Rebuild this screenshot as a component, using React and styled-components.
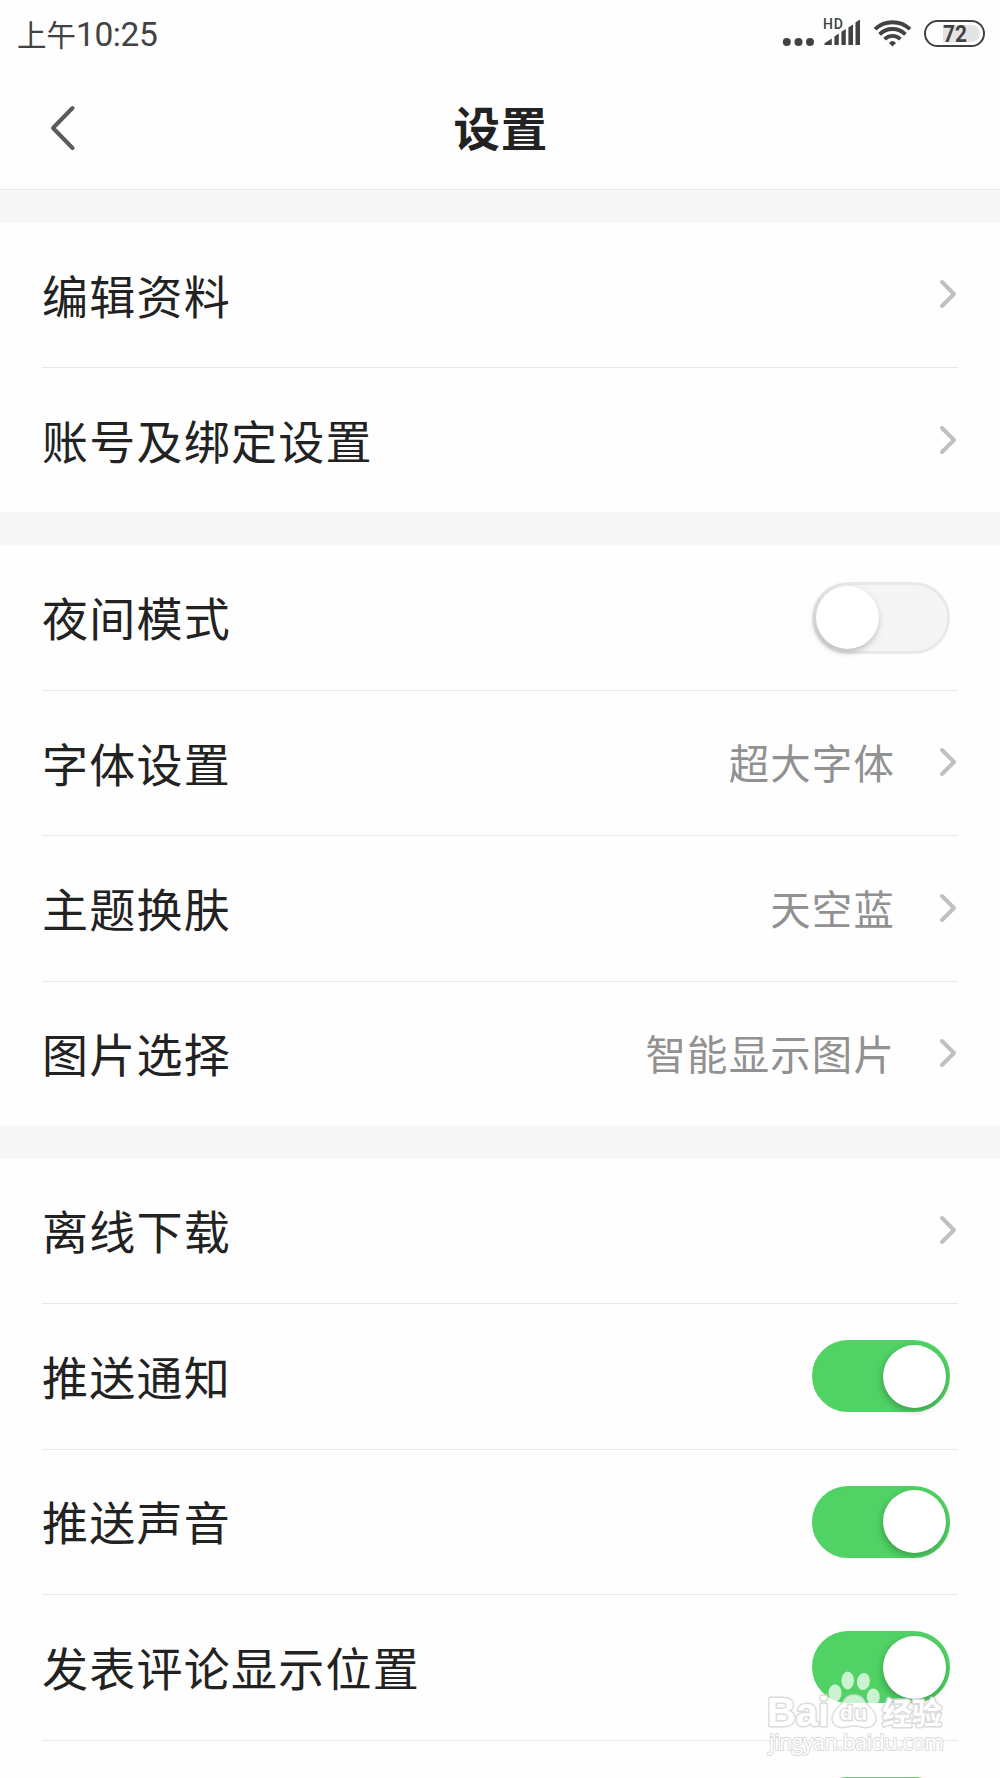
import React from 'react';
import styled, { createGlobalStyle } from 'styled-components';


const GlobalStyle = createGlobalStyle`
    * {
        box-sizing: border-box;
    }

    body {
        margin: 0;
        background-color: #fefefe;
        font-family: "Noto Sans CJK SC", "Noto Sans", sans-serif;
    }
`;

const PageStyled = styled.div`
    position: relative;
    width: 1000px;
    height: 1778px;
    overflow: hidden;
    background-color: #fefefe;
`;

const StatusBar = styled.div`
    display: flex;
    align-items: center;
    height: 66px;
    padding: 0 15px 0 17px;
    color: #424242;
`;

const TimeStyled = styled.div`
    display: flex;
    align-items: baseline;
    flex-grow: 1;
    margin-top: 2px;
    font-size: 29.5px;
    line-height: 40px;
`;

const ClockStyled = styled.span`
    font-family: Roboto, sans-serif;
    font-size: 33.5px;
    letter-spacing: -0.4px;
`;

const StatusIcons = styled.svg`
    display: block;
    width: 140px;
    height: 40px;
    margin-right: 4px;
`;

const BatteryStyled = styled.div`
    display: flex;
    align-items: center;
    width: 61px;
    height: 27px;
    padding: 0 3px 0 16.5px;
    border: 2.5px solid #424242;
    border-radius: 14px;
`;

const BatteryLevel = styled.div`
    width: 37px;
    height: 17px;
    border-radius: 0 9px 9px 0;
    background-color: #e4e4e4;
    font-family: Roboto, sans-serif;
    font-size: 24px;
    font-weight: 700;
    line-height: 18px;
`;

const BatteryText = styled.span`
    display: inline-block;
    transform: scaleX(0.87);
    transform-origin: left;
`;

const HeaderStyled = styled.header`
    display: grid;
    grid-template-columns: 100px 1fr 100px;
    align-items: center;
    height: 124px;
    border-bottom: 1px solid #e6e6e6;
`;

const BackButton = styled.button`
    display: flex;
    margin: 0 0 0 50px;
    padding: 0;
    border: none;
    background: none;
`;

const TitleStyled = styled.h1`
    margin: 0 0 4px 1.5px;
    color: #222222;
    font-size: 46.5px;
    font-weight: 700;
    letter-spacing: 0.8px;
    line-height: 60px;
    text-align: center;
`;

const GroupStyled = styled.section`
    padding: 0 42px;
    border-top: 33px solid #f7f7f7;
`;

const RowStyled = styled.div`
    display: flex;
    align-items: center;
    height: ${props => (props.$last ? 144 : 145.45)}px;
    border-bottom: ${props => (props.$last ? 'none' : '1px solid #e8e8e8')};
`;

const LabelStyled = styled.span`
    flex-grow: 1;
    margin-bottom: 3px;
    color: #222222;
    font-size: 46px;
    letter-spacing: 1.25px;
    line-height: 60px;
`;

const ValueStyled = styled.span`
    margin-bottom: 2px;
    margin-right: 44px;
    color: #919191;
    font-size: 40.4px;
    letter-spacing: 1.2px;
    line-height: 54px;
`;

const ArrowStyled = styled.svg`
    display: block;
    margin: 0 1px 1.5px 0;
`;

const SwitchStyled = styled.div`
    display: flex;
    align-items: center;
    justify-content: ${props => (props.$on ? 'flex-end' : 'flex-start')};
    width: 138px;
    height: 72px;
    margin-right: 8.5px;
    padding: 0 1px;
    border: 3px solid ${props => (props.$on ? '#50d264' : '#e9e9e9')};
    border-radius: 36px;
    background-color: ${props => (props.$on ? '#50d264' : '#f5f5f5')};
`;

const KnobStyled = styled.div`
    width: 63px;
    height: 63px;
    border-radius: 50%;
    background-color: #ffffff;
    box-shadow: -1px 3px 7px rgba(0, 0, 0, 0.25);
`;

const WatermarkStyled = styled.svg`
    position: absolute;
    left: 760px;
    top: 1664px;
`;

const WatermarkText = styled.text`
    fill: #ffffff;
    stroke: #dcdcdc;
    stroke-width: ${props => props.$outline || 3}px;
    stroke-linejoin: round;
    paint-order: stroke;
`;

const groups = [
    [
        { label: '编辑资料' },
        { label: '账号及绑定设置' },
    ],
    [
        { label: '夜间模式', type: 'switch', on: false },
        { label: '字体设置', value: '超大字体' },
        { label: '主题换肤', value: '天空蓝' },
        { label: '图片选择', value: '智能显示图片' },
    ],
    [
        { label: '离线下载' },
        { label: '推送通知', type: 'switch', on: true },
        { label: '推送声音', type: 'switch', on: true },
        { label: '发表评论显示位置', type: 'switch', on: true },
        { label: '', type: 'switch', on: true },
    ],
];

function Signals() {
    return (
        <StatusIcons viewBox="780 13 140 40" fill="#424242">
            <circle cx="786.8" cy="42" r="4" />
            <circle cx="798.5" cy="42" r="4" />
            <circle cx="810" cy="42" r="4" />
            <text x="823" y="28.6" fontFamily="Roboto, sans-serif" fontSize="14" fontWeight="500" textLength="20">HD</text>
            <path d="M824.5 45V43.3L831.8 38.4V45Z" />
            <path d="M834.4 45V36.5L838.8 33.5V45Z" />
            <path d="M841.4 45V31.8L845.8 29V45Z" />
            <path d="M848.4 45V27.4L853 24.5V45Z" />
            <path d="M855.5 45V22.5L860 19.5V45Z" />
            <g fill="none" stroke="#424242" strokeWidth="3.8">
                <path d="M875 29.2A25.5 25.5 0 0 1 910 29.2" />
                <path d="M879.6 34.3A18.4 18.4 0 0 1 905.4 34.3" />
                <path d="M884.6 39.2A11.2 11.2 0 0 1 900.4 39.2" />
            </g>
            <path d="M889 43Q892.5 39 896 43L892.5 46.5Z" />
        </StatusIcons>
    );
}

function Arrow() {
    return (
        <ArrowStyled width="18" height="30" viewBox="0 0 18 30" fill="none" stroke="#c0c0c0" strokeWidth="4" strokeLinecap="round" strokeLinejoin="round">
            <path d="M3 3L15 15L3 27" />
        </ArrowStyled>
    );
}

function Switch({ on }) {
    return (
        <SwitchStyled $on={on} role="switch" aria-checked={on}>
            <KnobStyled />
        </SwitchStyled>
    );
}

function Watermark() {
    return (
        <WatermarkStyled width="200" height="100" viewBox="760 1664 200 100">
            <g fill="#ffffff" fillOpacity="0.7">
                <ellipse cx="835" cy="1693" rx="6.5" ry="8.7" />
                <ellipse cx="847.7" cy="1680.5" rx="6.3" ry="8.9" />
                <ellipse cx="863.4" cy="1681.5" rx="6.5" ry="8.5" transform="rotate(8 863.4 1681.5)" />
                <ellipse cx="873.3" cy="1697" rx="6.5" ry="8.5" />
                <path stroke="#cfcfcf" strokeOpacity="0.7" strokeWidth="1.5" d="M844 1700C848 1693 860 1693 864 1700C867 1706 876 1710 876 1718C876 1727 868 1729 861 1727Q854 1725 847 1727C839 1729 832 1726 832 1718C832 1710 841 1706 844 1700Z" />
            </g>
            <WatermarkText x="767" y="1726" fontFamily="Liberation Sans, sans-serif" fontSize="40" fontWeight="700" textLength="62">Bai</WatermarkText>
            <WatermarkText x="840" y="1720" fontFamily="Liberation Sans, sans-serif" fontSize="21" fontWeight="700" textLength="27">du</WatermarkText>
            <WatermarkText x="882" y="1724" fontFamily="Noto Sans CJK SC, sans-serif" fontSize="30" fontWeight="700" textLength="60">经验</WatermarkText>
            <WatermarkText $outline={2} x="769" y="1750" fontFamily="Open Sans, sans-serif" fontSize="21" textLength="175">jingyan.baidu.com</WatermarkText>
        </WatermarkStyled>
    );
}

export default class App extends React.Component {
    render(){
        return (
            <PageStyled>
                <GlobalStyle />
                <StatusBar>
                    <TimeStyled>上午<ClockStyled>10:25</ClockStyled></TimeStyled>
                    <Signals />
                    <BatteryStyled>
                        <BatteryLevel><BatteryText>72</BatteryText></BatteryLevel>
                    </BatteryStyled>
                </StatusBar>
                <HeaderStyled>
                    <BackButton type="button" aria-label="返回">
                        <svg width="26" height="46" viewBox="0 0 26 46" fill="none" stroke="#5a5a5a" strokeWidth="4" strokeLinecap="round" strokeLinejoin="round">
                            <path d="M22.5 3L3 23L22.5 43" />
                        </svg>
                    </BackButton>
                    <TitleStyled>设置</TitleStyled>
                </HeaderStyled>
                {groups.map((rows, i) => (
                    <GroupStyled key={i}>
                        {rows.map((row, j) => (
                            <RowStyled key={j} $last={j === rows.length - 1}>
                                <LabelStyled>{row.label}</LabelStyled>
                                {row.value && <ValueStyled>{row.value}</ValueStyled>}
                                {row.type === 'switch' ? <Switch on={row.on} /> : <Arrow />}
                            </RowStyled>
                        ))}
                    </GroupStyled>
                ))}
                <Watermark />
            </PageStyled>
        )
    }

};
